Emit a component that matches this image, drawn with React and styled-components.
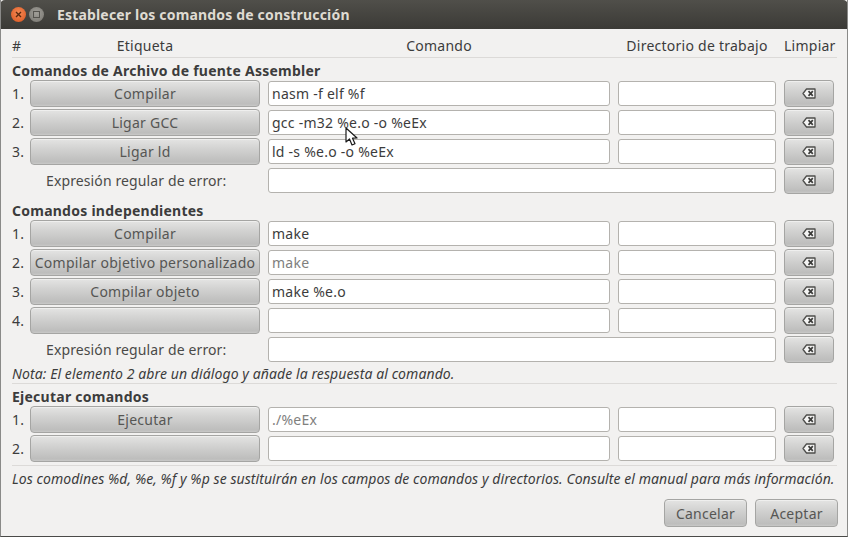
import React from "react";
import styled, { createGlobalStyle } from "styled-components";

const Global = createGlobalStyle`
  html, body { margin: 0; padding: 0; background: #f2f1f0; }
  * { box-sizing: border-box; }
`;

const Ventana = styled.div`
  position: relative;
  width: 848px;
  height: 537px;
  overflow: hidden;
  background: #f2f1f0;
  color: #3c3c3c;
  font-family: "Noto Sans", "Open Sans", sans-serif;
  font-size: 14px;
  letter-spacing: 0.25px;
  border-bottom: 1px solid #4a4a48;
  border-left: 1px solid #8a8a88;
  border-right: 1px solid #8a8a88;
  display: flex;
  flex-direction: column;
`;

const BarraTitulo = styled.div`
  height: 29px;
  flex-shrink: 0;
  margin: 0 -1px;
  background: linear-gradient(#504f4a, #3b3a36);
  border-radius: 5px 5px 0 0;
  display: flex;
  align-items: center;
  padding-left: 11px;
  color: #dfdbd2;
  font-weight: 700;
  font-size: 14px;
  letter-spacing: 0.17px;
`;

const BotonCerrar = styled.div`
  width: 15px;
  height: 15px;
  border-radius: 50%;
  background: radial-gradient(circle at 50% 40%, #f58a55, #d9541e);
  display: flex;
  align-items: center;
  justify-content: center;
  margin-right: 3px;
`;

const BotonMin = styled.div`
  width: 15px;
  height: 15px;
  border-radius: 50%;
  background: radial-gradient(circle at 50% 40%, #a09e98, #77756f);
  display: flex;
  align-items: center;
  justify-content: center;
  margin-right: 13px;
`;

const CuadroMin = styled.div`
  width: 7px;
  height: 7px;
  border: 1px solid #55534e;
`;

const Cuerpo = styled.div`
  flex: 1;
  display: flex;
  flex-direction: column;
  padding: 0 11px;
`;

const Cabecera = styled.div`
  height: 28px;
  display: grid;
  grid-template-columns: 10px 230px 342px 158px 50px;
  column-gap: 8px;
  align-items: center;
  padding-top: 5px;
  line-height: 18px;
  white-space: nowrap;
`;

const Centrado = styled.div`
  text-align: center;
`;

const Separador = styled.div`
  height: 1px;
  width: 825px;
  background: #dcdad8;
`;

const TituloSeccion = styled.div`
  height: ${(p) => p.$alto}px;
  display: flex;
  align-items: flex-end;
  font-weight: 700;
  line-height: 18px;
  white-space: nowrap;
`;

const Lista = styled.div`
  display: flex;
  flex-direction: column;
  gap: 2px;
`;

const Fila = styled.div`
  height: 27px;
  display: grid;
  grid-template-columns: 10px 230px 342px 158px 50px;
  column-gap: 8px;
  align-items: center;
  white-space: nowrap;
`;

const Boton = styled.button`
  height: 27px;
  width: 100%;
  padding: 0;
  border: 1px solid #a5a5a3;
  border-radius: 4px;
  background: linear-gradient(#e4e4e3 0%, #d4d4d3 35%, #bdbdbc 92%, #c9c9c8 100%);
  box-shadow: inset 0 1px 0 #efefee;
  color: #565654;
  font: inherit;
  letter-spacing: inherit;
  display: flex;
  align-items: center;
  justify-content: center;
  white-space: nowrap;
`;

const Entrada = styled.div`
  height: 25px;
  background: #fff;
  border: 1px solid #b4b2ae;
  border-radius: 3px;
  padding: 0 3px;
  display: flex;
  align-items: center;
  color: ${(p) => (p.$tenue ? "#80807e" : "#3c3c3c")};
  overflow: hidden;
`;

const EntradaAncha = styled(Entrada)`
  grid-column: 3 / span 2;
`;

const EtiquetaError = styled.div`
  grid-column: 1 / span 2;
  padding-left: 34px;
  letter-spacing: 0.12px;
  color: #4a4a48;
`;

const Nota = styled.div`
  font-style: italic;
  letter-spacing: ${(p) => p.$espacio}px;
  height: ${(p) => p.$alto}px;
  display: flex;
  align-items: center;
  white-space: nowrap;
`;

const Hueco = styled.div`
  height: 3px;
`;

const Pie = styled.div`
  display: flex;
  justify-content: flex-end;
  gap: 8px;
  padding-top: 9px;
  margin-right: -2px;
`;

const BotonPie = styled(Boton)`
  width: 83px;
  height: 28px;
`;

const Cursor = styled.svg`
  position: absolute;
  left: 344px;
  top: 127px;
`;

const IconoBorrar = () => (
  <svg width="14" height="11" viewBox="0 0 14 11">
    <path d="M4.5 1 H13 V10 H4.5 L1 5.5 Z" fill="#f4f4f3" stroke="#4d4d4b" strokeWidth="1.3" strokeLinejoin="round" />
    <path d="M6.5 3.2 L10.8 7.8 M10.8 3.2 L6.5 7.8" stroke="#3c3c3a" strokeWidth="1.7" />
  </svg>
);

const FilaComando = ({ n, etiqueta, comando, tenue }) => (
  <Fila>
    <div>{n}.</div>
    <Boton>{etiqueta}</Boton>
    <Entrada $tenue={tenue}>{comando}</Entrada>
    <Entrada />
    <Boton><IconoBorrar /></Boton>
  </Fila>
);

const FilaError = () => (
  <Fila>
    <EtiquetaError>Expresión regular de error:</EtiquetaError>
    <EntradaAncha />
    <Boton><IconoBorrar /></Boton>
  </Fila>
);

export default function App() {
  return (
    <Ventana>
      <Global />
      <BarraTitulo>
        <BotonCerrar>
          <svg width="7" height="7" viewBox="0 0 7 7">
            <path d="M1 1 L6 6 M6 1 L1 6" stroke="#5a2a10" strokeWidth="1.4" />
          </svg>
        </BotonCerrar>
        <BotonMin><CuadroMin /></BotonMin>
        Establecer los comandos de construcción
      </BarraTitulo>
      <Cuerpo>
        <Cabecera>
          <div>#</div>
          <Centrado>Etiqueta</Centrado>
          <Centrado>Comando</Centrado>
          <Centrado>Directorio de trabajo</Centrado>
          <Centrado>Limpiar</Centrado>
        </Cabecera>
        <Separador />
        <TituloSeccion $alto={22}>Comandos de Archivo de fuente Assembler</TituloSeccion>
        <Lista>
          <FilaComando n={1} etiqueta="Compilar" comando="nasm -f elf %f" />
          <FilaComando n={2} etiqueta="Ligar GCC" comando="gcc -m32 %e.o -o %eEx" />
          <FilaComando n={3} etiqueta="Ligar ld" comando="ld -s %e.o -o %eEx" />
          <FilaError />
        </Lista>
        <TituloSeccion $alto={26}>Comandos independientes</TituloSeccion>
        <Lista>
          <FilaComando n={1} etiqueta="Compilar" comando="make" />
          <FilaComando n={2} etiqueta="Compilar objetivo personalizado" comando="make" tenue />
          <FilaComando n={3} etiqueta="Compilar objeto" comando="make %e.o" />
          <FilaComando n={4} etiqueta="" comando="" />
          <FilaError />
        </Lista>
        <Nota $alto={20} $espacio={0.09}>Nota: El elemento 2 abre un diálogo y añade la respuesta al comando.</Nota>
        <Separador />
        <TituloSeccion $alto={22}>Ejecutar comandos</TituloSeccion>
        <Lista>
          <FilaComando n={1} etiqueta="Ejecutar" comando="./%eEx" tenue />
          <FilaComando n={2} etiqueta="" comando="" />
        </Lista>
        <Hueco />
        <Separador />
        <Nota $alto={24} $espacio={0.07}>Los comodines %d, %e, %f y %p se sustituirán en los campos de comandos y directorios. Consulte el manual para más información.</Nota>
        <Pie>
          <BotonPie>Cancelar</BotonPie>
          <BotonPie>Aceptar</BotonPie>
        </Pie>
      </Cuerpo>
      <Cursor width="15" height="20" viewBox="0 0 15 20">
        <path d="M1 1 L1 15 L4.5 12 L7 18 L10 16.8 L7.5 11.2 L12 11 Z" fill="#fff" stroke="#1a1a1a" strokeWidth="1.2" strokeLinejoin="round" />
      </Cursor>
    </Ventana>
  );
}
